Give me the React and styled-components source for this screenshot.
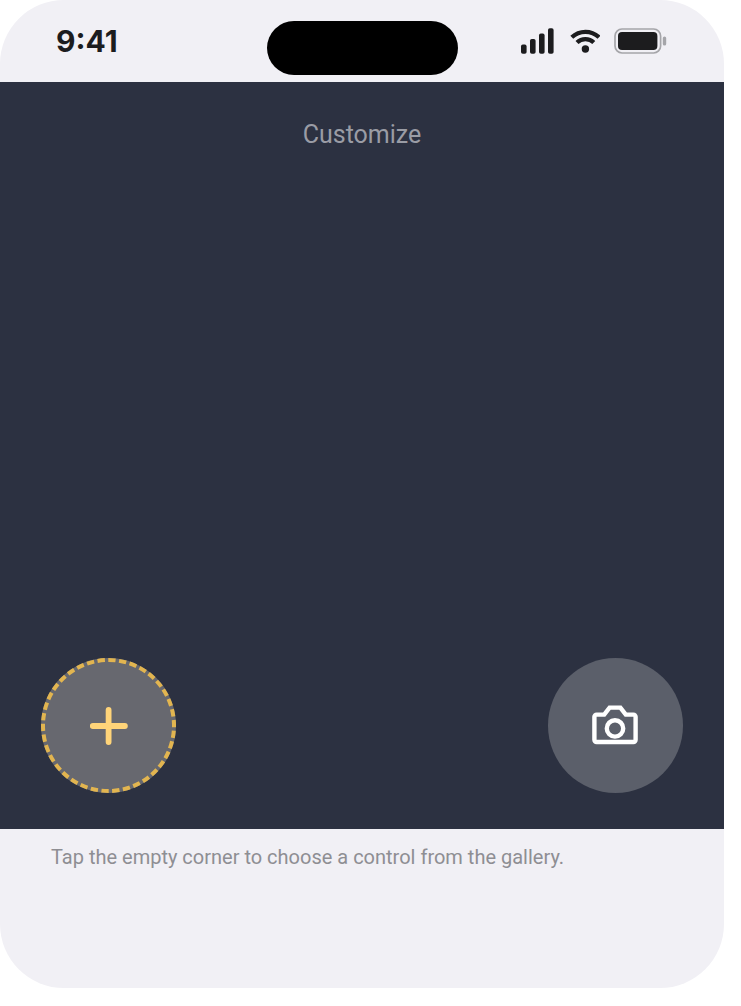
import React from "react";
import styled, { createGlobalStyle } from "styled-components";

export default function App() {
    return (
        <>
            <GlobalStyle />
            <Page>
                <Phone>
                    <StatusBar>
                        <Time>9:41</Time>
                        <Island />
                        <Indicators>
                            <SignalIcon />
                            <WifiIcon />
                            <BatteryIcon />
                        </Indicators>
                    </StatusBar>
                    <Stage>
                        <Title>Customize</Title>
                        <Corners>
                            <CornerButton $empty aria-label="Add control">
                                <DashedRing />
                                <PlusIcon />
                            </CornerButton>
                            <CornerButton aria-label="Camera">
                                <CameraIcon />
                            </CornerButton>
                        </Corners>
                    </Stage>
                    <Hint>Tap the empty corner to choose a control from the gallery.</Hint>
                </Phone>
            </Page>
        </>
    )
}


const SignalIcon = () => (
    <svg width="34" height="26" viewBox="0 0 34 26" fill="#1c1c1e" aria-hidden="true">
        <rect x="1" y="16.6" width="5.6" height="9.2" rx="1.8" />
        <rect x="10" y="11" width="5.6" height="14.8" rx="1.8" />
        <rect x="19" y="5.6" width="5.6" height="20.2" rx="1.8" />
        <rect x="28" y="0.2" width="5.6" height="25.6" rx="1.8" />
    </svg>
)

const WifiIcon = () => (
    <svg width="32" height="26" viewBox="-2 0 32 26" fill="none" stroke="#1c1c1e" strokeWidth="4.2" aria-hidden="true">
        <path d="M1.8 9.3a19.6 19.6 0 0 1 27.2 0" />
        <path d="M7 14.6a11.9 11.9 0 0 1 16.8 0" />
        <circle cx="15.4" cy="21" r="3.7" fill="#1c1c1e" stroke="none" />
    </svg>
)

const BatteryIcon = () => (
    <svg width="54" height="26" viewBox="0 0 54 26" aria-hidden="true">
        <rect x="1" y="1" width="45.6" height="24" rx="7" fill="none" stroke="#a5a5a9" strokeWidth="1.7" />
        <rect x="4" y="4" width="39.4" height="18" rx="4" fill="#1c1c1e" />
        <rect x="48.8" y="8.4" width="3.4" height="9.2" rx="1.7" fill="#a5a5a9" />
    </svg>
)

const DashedRing = () => (
    <Ring viewBox="0 0 135 135" aria-hidden="true">
        <circle cx="67.5" cy="67.5" r="65.5" pathLength="380" strokeDasharray="6.8 3.2" strokeDashoffset="5.2" />
    </Ring>
)

const PlusIcon = () => (
    <svg width="38" height="38" viewBox="0 0 38 38" stroke="#ffd479" strokeWidth="5.8" strokeLinecap="round" aria-hidden="true">
        <path d="M18.6 2.9v32.2M2.7 19h32.2" />
    </svg>
)

const CameraIcon = () => (
    <svg width="47" height="41" viewBox="0 0 47 41" fill="none" stroke="#fff" strokeWidth="4.4" aria-hidden="true">
        <path d="M4.6 9.6h7.6l5.4-7h10.8l5.4 7h7.6a2.2 2.2 0 0 1 2.2 2.2v23a2.2 2.2 0 0 1-2.2 2.2H4.6a2.2 2.2 0 0 1-2.2-2.2v-23a2.2 2.2 0 0 1 2.2-2.2z" />
        <circle cx="23" cy="23.4" r="8.2" />
    </svg>
)


const GlobalStyle = createGlobalStyle`
    * {
        box-sizing: border-box;
    }

    body {
        margin: 0;
        background: #ffffff;
        font-family: Roboto, "Liberation Sans", sans-serif;
    }
`

const Page = styled.div`
    display: flex;
    min-height: 100vh;
    padding: 0 17px 18px 0;
`

const Phone = styled.main`
    display: flex;
    flex: 1;
    flex-direction: column;
    overflow: hidden;
    border-radius: 64px;
    background: #f1f0f5;
`

const StatusBar = styled.header`
    display: grid;
    grid-template-columns: 1fr auto 1fr;
    align-items: center;
    height: 82px;
    padding: 0 56px;
`

const Time = styled.span`
    font-family: Inter, sans-serif;
    font-size: 30px;
    line-height: 36px;
    font-weight: 700;
    color: #1c1c1e;
`

const Island = styled.div`
    width: 191px;
    height: 54px;
    margin-top: 13px;
    border-radius: 27px;
    background: #000000;
`

const Indicators = styled.div`
    display: flex;
    justify-content: flex-end;
    gap: 14px;
`

const Stage = styled.section`
    display: flex;
    flex: 1;
    flex-direction: column;
    justify-content: space-between;
    padding: 36px 41px;
    background: #2c3141;
`

const Title = styled.h1`
    margin: 0;
    font-size: 25px;
    line-height: 34px;
    font-weight: 400;
    text-align: center;
    color: #9a9ca5;
`

const Corners = styled.div`
    display: flex;
    justify-content: space-between;
`

const CornerButton = styled.button`
    position: relative;
    display: flex;
    align-items: center;
    justify-content: center;
    width: 135px;
    height: 135px;
    padding: 0;
    border: 0;
    border-radius: 50%;
    background: ${({ $empty }) => ($empty ? '#67686f' : '#5b5f6a')};
`

const Ring = styled.svg`
    position: absolute;
    inset: 0;
    fill: none;
    stroke: #e2b550;
    stroke-width: 4;
`

const Hint = styled.p`
    min-height: 159px;
    margin: 0;
    padding: 14px 51px;
    font-size: 20px;
    line-height: 28px;
    color: #8e8e93;
`
